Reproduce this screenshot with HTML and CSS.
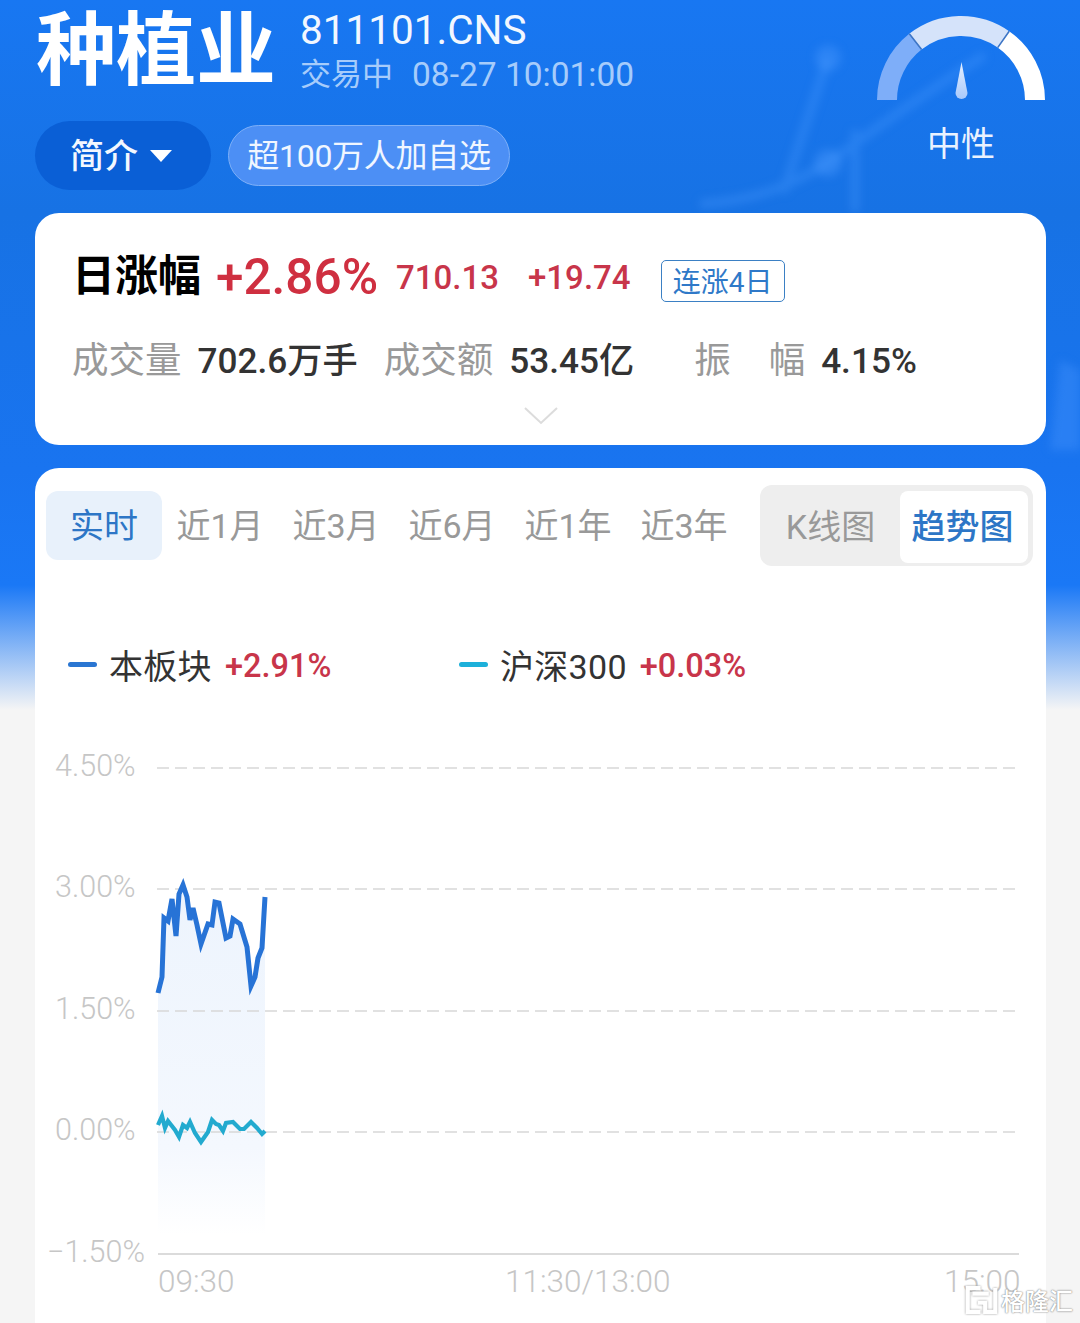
FILE: index.html
```html
<!DOCTYPE html>
<html>
<head>
    <meta charset="utf-8">
    <link rel="stylesheet" href="styles.css">
    <title>种植业</title>
</head>
<body>
    <svg class="bg-lines" viewBox="0 0 1080 720" width="1080" height="720">
        <g fill="none" stroke="#4d9bff" stroke-width="9" opacity="0.32">
            <path d="M700 204 C760 200 790 185 828 163 C880 125 930 90 985 55"/>
            <path d="M783 193 L828 58"/>
            <path d="M855 212 L855 130"/>
        </g>
        <circle cx="828" cy="58" r="13" fill="#4d9bff" opacity="0.36"/>
        <circle cx="828" cy="163" r="14" fill="#4d9bff" opacity="0.36"/>
        <path d="M1060 360 L1080 370 L1080 450 L1050 450 Z" fill="#3d8ffb" opacity="0.45"/>
    </svg>

    <header class="top">
        <div class="top-left">
            <div class="name-row">
                <h1 class="name">种植业</h1>
                <div class="name-meta">
                    <div class="code">811101.CNS</div>
                    <div class="status"><span>交易中</span><span class="time">08-27 10:01:00</span></div>
                </div>
            </div>
            <div class="pill-row">
                <div class="intro-btn">简介<i class="caret"></i></div>
                <div class="fans-pill">超100万人加自选</div>
            </div>
        </div>
        <div class="gauge">
            <svg viewBox="0 0 170 90" width="170" height="90">
                <defs>
                    <linearGradient id="needle" x1="0" y1="0" x2="0" y2="1">
                        <stop offset="0" stop-color="#e6f0ff"/>
                        <stop offset="1" stop-color="#a9c9fb"/>
                    </linearGradient>
                </defs>
                <g fill="none" stroke-width="20">
                    <path d="M11 86 A74 74 0 0 1 39.4 27.7" stroke="#7eaef9"/>
                    <path d="M39.4 27.7 A74 74 0 0 1 127.4 25.4" stroke="#d5e3fa"/>
                    <path d="M127.4 25.4 A74 74 0 0 1 159 86" stroke="#ffffff"/>
                </g>
                <path d="M33.3 19.8 L45.6 35.6 M133.2 17.2 L121.7 33.6" stroke="#3e76c6" stroke-width="1.6"/>
                <path d="M85.5 48 L79.5 79 a6 6 0 0 0 12 0 Z" fill="url(#needle)"/>
            </svg>
            <div class="gauge-text">中性</div>
        </div>
    </header>

    <section class="card quote">
        <div class="quote-main">
            <span class="quote-title">日涨幅</span>
            <span class="pct">+2.86%</span>
            <span class="price">710.13</span>
            <span class="price change">+19.74</span>
            <span class="streak">连涨4日</span>
        </div>
        <div class="stats">
            <span class="stat-label">成交量</span><span class="stat-val vol">702.6万手</span>
            <span class="stat-label">成交额</span><span class="stat-val amt">53.45亿</span>
            <span class="stat-label wide"><span>振</span><span>幅</span></span><span class="stat-val">4.15%</span>
        </div>
        <div class="more">
            <svg viewBox="0 0 34 20" width="34" height="20"><path d="M1 2 L17 17 L33 2" fill="none" stroke="#dcdcdc" stroke-width="2"/></svg>
        </div>
    </section>

    <section class="card chart-card">
        <div class="tabs">
            <div class="range-tabs">
                <span class="range active">实时</span>
                <span class="range">近1月</span>
                <span class="range">近3月</span>
                <span class="range">近6月</span>
                <span class="range">近1年</span>
                <span class="range">近3年</span>
            </div>
            <div class="toggle">
                <span class="toggle-item">K线图</span>
                <span class="toggle-item on">趋势图</span>
            </div>
        </div>
        <div class="legend">
            <div class="legend-item first"><i class="dash blue"></i><span>本板块</span><b>+2.91%</b></div>
            <div class="legend-item"><i class="dash cyan"></i><span>沪深300</span><b>+0.03%</b></div>
        </div>
        <svg class="chart" viewBox="35 740 1011 583" width="1011" height="583">
            <defs>
                <linearGradient id="area" x1="0" y1="0" x2="0" y2="1">
                    <stop offset="0" stop-color="#edf4fd"/>
                    <stop offset="0.75" stop-color="#f4f8fe"/>
                    <stop offset="1" stop-color="#ffffff"/>
                </linearGradient>
            </defs>
            <path d="M158 993 L162 977 L164 918 L168 921 L172 899 L176 936 L179 894 L183 885 L187 897 L190 920 L193 908 L197 925 L201 944 L208 924 L212 925 L215 902 L219 903 L226 938 L230 936 L233 919 L240 924 L247 947 L251 986 L255 977 L258 958 L262 948 L265 897 L265 1235 L158 1235 Z" fill="url(#area)"/>
            <g class="grid">
                <line x1="157" y1="768" x2="1017" y2="768"/>
                <line x1="157" y1="889" x2="1017" y2="889"/>
                <line x1="157" y1="1011" x2="1017" y2="1011"/>
                <line x1="157" y1="1132" x2="1017" y2="1132"/>
            </g>
            <line class="axis" x1="158" y1="1254" x2="1019" y2="1254"/>
            <polyline class="line-blue" points="158,993 162,977 164,918 168,921 172,899 176,936 179,894 183,885 187,897 190,920 193,908 197,925 201,944 208,924 212,925 215,902 219,903 226,938 230,936 233,919 240,924 247,947 251,986 255,977 258,958 262,948 265,897"/>
            <polyline class="line-cyan" points="158,1125 162,1116 165,1128 168,1121 175,1130 179,1137 183,1125 187,1128 190,1122 195,1133 201,1142 208,1132 212,1120 216,1124 219,1125 223,1131 226,1123 233,1122 240,1129 244,1129 251,1122 257,1128 262,1134 265,1131"/>
            <g class="tick">
                <text x="55" y="776">4.50%</text>
                <text x="55" y="897">3.00%</text>
                <text x="55" y="1019">1.50%</text>
                <text x="55" y="1140">0.00%</text>
                <text x="47" y="1262">−1.50%</text>
            </g>
            <g class="tick time-tick">
                <text x="158" y="1292">09:30</text>
                <text x="505" y="1292">11:30/13:00</text>
                <text x="944" y="1292">15:00</text>
            </g>
        </svg>
    </section>

    <div class="watermark">
        <svg viewBox="0 0 36 32" width="33" height="30">
            <path d="M17 3 H3 V29 H17 M8 9 H26 M33 3 V29 H22 V19 H14" fill="none" stroke="#fff" stroke-width="4.5"/>
        </svg>
        <span>格隆汇</span>
    </div>
</body>
</html>
```

FILE: styles.css
```css
* {
    box-sizing: border-box;
}
html, body {
    margin: 0;
    height: 1323px;
    overflow: hidden;
}
body {
    position: relative;
    width: 1080px;
    font-family: Roboto, "Noto Sans CJK SC", sans-serif;
    background: linear-gradient(#1877f2 0, #1772e4 212px, #1974f0 470px, #1a78f6 585px, #f5f5f5 710px);
}
.bg-lines {
    position: absolute;
    left: 0;
    top: 0;
    filter: blur(4px);
}

/* header */
.top {
    position: relative;
    height: 213px;
    padding: 0 34px 0 35px;
    display: flex;
    justify-content: space-between;
}
.name-row {
    display: flex;
    height: 121px;
}
.name {
    margin: 3px 0 0 1px;
    font-size: 80px;
    line-height: 96px;
    font-weight: 700;
    color: #fff;
    white-space: nowrap;
}
.name-meta {
    margin-left: 24px;
    padding-top: 7px;
}
.code {
    font-size: 40.5px;
    line-height: 46px;
    color: #f2f7ff;
}
.status {
    display: flex;
    align-items: center;
    gap: 19px;
    font-size: 31px;
    line-height: 44px;
    color: #a6ccfb;
    white-space: nowrap;
}
.time {
    font-size: 33.5px;
}
.pill-row {
    display: flex;
    align-items: center;
    gap: 17px;
}
.intro-btn {
    width: 176px;
    height: 69px;
    padding: 0 0 4px 35px;
    border-radius: 35px;
    background: #0a5fd6;
    color: #f3f8ff;
    font-size: 34px;
    font-weight: 500;
    display: flex;
    align-items: center;
}
.caret {
    margin: 4px 0 0 12px;
    border-left: 11px solid transparent;
    border-right: 11px solid transparent;
    border-top: 12px solid #fff;
}
.fans-pill {
    width: 282px;
    height: 61px;
    padding-bottom: 5px;
    border-radius: 31px;
    border: 1px solid #7eb0f8;
    background: #4c8ff5;
    color: #f0f6ff;
    font-size: 32px;
    letter-spacing: -0.3px;
    display: flex;
    align-items: center;
    justify-content: center;
    white-space: nowrap;
}
.gauge {
    width: 170px;
    margin-top: 14px;
    text-align: center;
}
.gauge svg {
    display: block;
}
.gauge-text {
    margin-top: 16px;
    font-size: 34px;
    line-height: 48px;
    color: #e9f2ff;
}

/* cards */
.card {
    position: relative;
    width: 1011px;
    margin-left: 35px;
    background: #fff;
    border-radius: 24px;
}
.quote {
    height: 232px;
    padding: 34px 0 0 40px;
}
.quote-main {
    display: flex;
    align-items: center;
    height: 60px;
    white-space: nowrap;
}
.quote-title {
    margin: 0 0 10px -3px;
    font-size: 43px;
    font-weight: 700;
    color: #000;
}
.pct {
    margin-left: 15px;
    font-size: 49.5px;
    font-weight: 500;
    color: #cf2f40;
}
.price {
    margin-left: 18px;
    font-size: 33px;
    font-weight: 500;
    color: #c8354a;
}
.change {
    margin-left: 29px;
}
.streak {
    margin: 8px 0 0 30px;
    width: 124px;
    height: 42px;
    padding-bottom: 3px;
    border: 1px solid #3b80c4;
    border-radius: 5px;
    color: #2f79c8;
    font-size: 28px;
    display: flex;
    align-items: center;
    justify-content: center;
}
.stats {
    display: flex;
    align-items: baseline;
    height: 56px;
    margin: 24px 0 0 -3px;
    white-space: nowrap;
}
.stat-label {
    font-size: 36.5px;
    color: #999;
}
.stat-label.wide {
    display: flex;
    gap: 38px;
}
.stat-val {
    margin-left: 16px;
    font-size: 35.2px;
    font-weight: 500;
    color: #333;
}
.stat-val.vol {
    margin-right: 26px;
}
.stat-val.amt {
    margin-right: 60px;
}
.more {
    display: flex;
    justify-content: center;
    margin: 19px 0 0 -40px;
}
.more svg {
    display: block;
}

.chart-card {
    height: 900px;
    margin-top: 23px;
    border-radius: 24px 24px 0 0;
}
.tabs {
    display: flex;
    justify-content: space-between;
    padding: 17px 13px 0 11px;
}
.range-tabs {
    display: flex;
    align-items: flex-start;
    margin-top: 6px;
}
.range {
    width: 116px;
    height: 69px;
    font-size: 34px;
    line-height: 71px;
    color: #999;
    text-align: center;
    white-space: nowrap;
}
.range.active {
    background: #e8f1fb;
    border-radius: 12px;
    color: #2d76c6;
}
.toggle {
    width: 273px;
    height: 81px;
    padding: 6px 5px 3px;
    background: #eee;
    border-radius: 12px;
    display: flex;
}
.toggle-item {
    font-size: 34px;
    color: #999;
    width: 135px;
    padding-right: 4px;
    line-height: 72px;
    text-align: center;
    white-space: nowrap;
}
.toggle-item.on {
    width: 128px;
    padding-right: 3px;
    background: #fff;
    border-radius: 8px;
    color: #2d76c6;
    font-weight: 500;
}
.legend {
    display: flex;
    align-items: center;
    height: 60px;
    margin-top: 68px;
    padding-left: 33px;
    white-space: nowrap;
}
.legend-item {
    display: flex;
    align-items: center;
    font-size: 34px;
    color: #333;
}
.legend-item span {
    letter-spacing: 0.3px;
}
.legend-item.first {
    width: 391px;
}
.legend-item b {
    margin: 3px 0 0 13px;
    font-size: 32.5px;
    font-weight: 500;
    color: #c8354a;
}
.dash {
    width: 29px;
    height: 5px;
    margin-right: 12px;
    border-radius: 3px;
}
.dash.blue {
    background: #2a76d2;
}
.dash.cyan {
    background: #1db0da;
}
.chart {
    position: absolute;
    left: 0;
    top: 272px;
}
.grid line {
    stroke: #d8d8d8;
    stroke-width: 1.5;
    stroke-dasharray: 12 6;
}
.axis {
    stroke: #cfcfcf;
    stroke-width: 1.5;
}
.line-blue, .line-cyan {
    fill: none;
    stroke-linejoin: miter;
}
.line-blue {
    stroke: #2773d6;
    stroke-width: 5;
}
.line-cyan {
    stroke: #22aacf;
    stroke-width: 4.2;
}
.tick text {
    font-size: 30.5px;
    font-weight: 300;
    fill: #c6c6c6;
}
.time-tick text {
    font-size: 31.5px;
}

/* overlay mark, sits over the chart corner */
.watermark {
    position: absolute;
    left: 965px;
    top: 1282px;
    display: flex;
    align-items: center;
    gap: 3px;
    color: #fff;
    font-size: 24px;
    font-weight: 500;
    text-shadow: 0 0 2px #888, 0 0 1px #888;
}
.watermark svg {
    filter: drop-shadow(0 0 1px #999);
}
```
